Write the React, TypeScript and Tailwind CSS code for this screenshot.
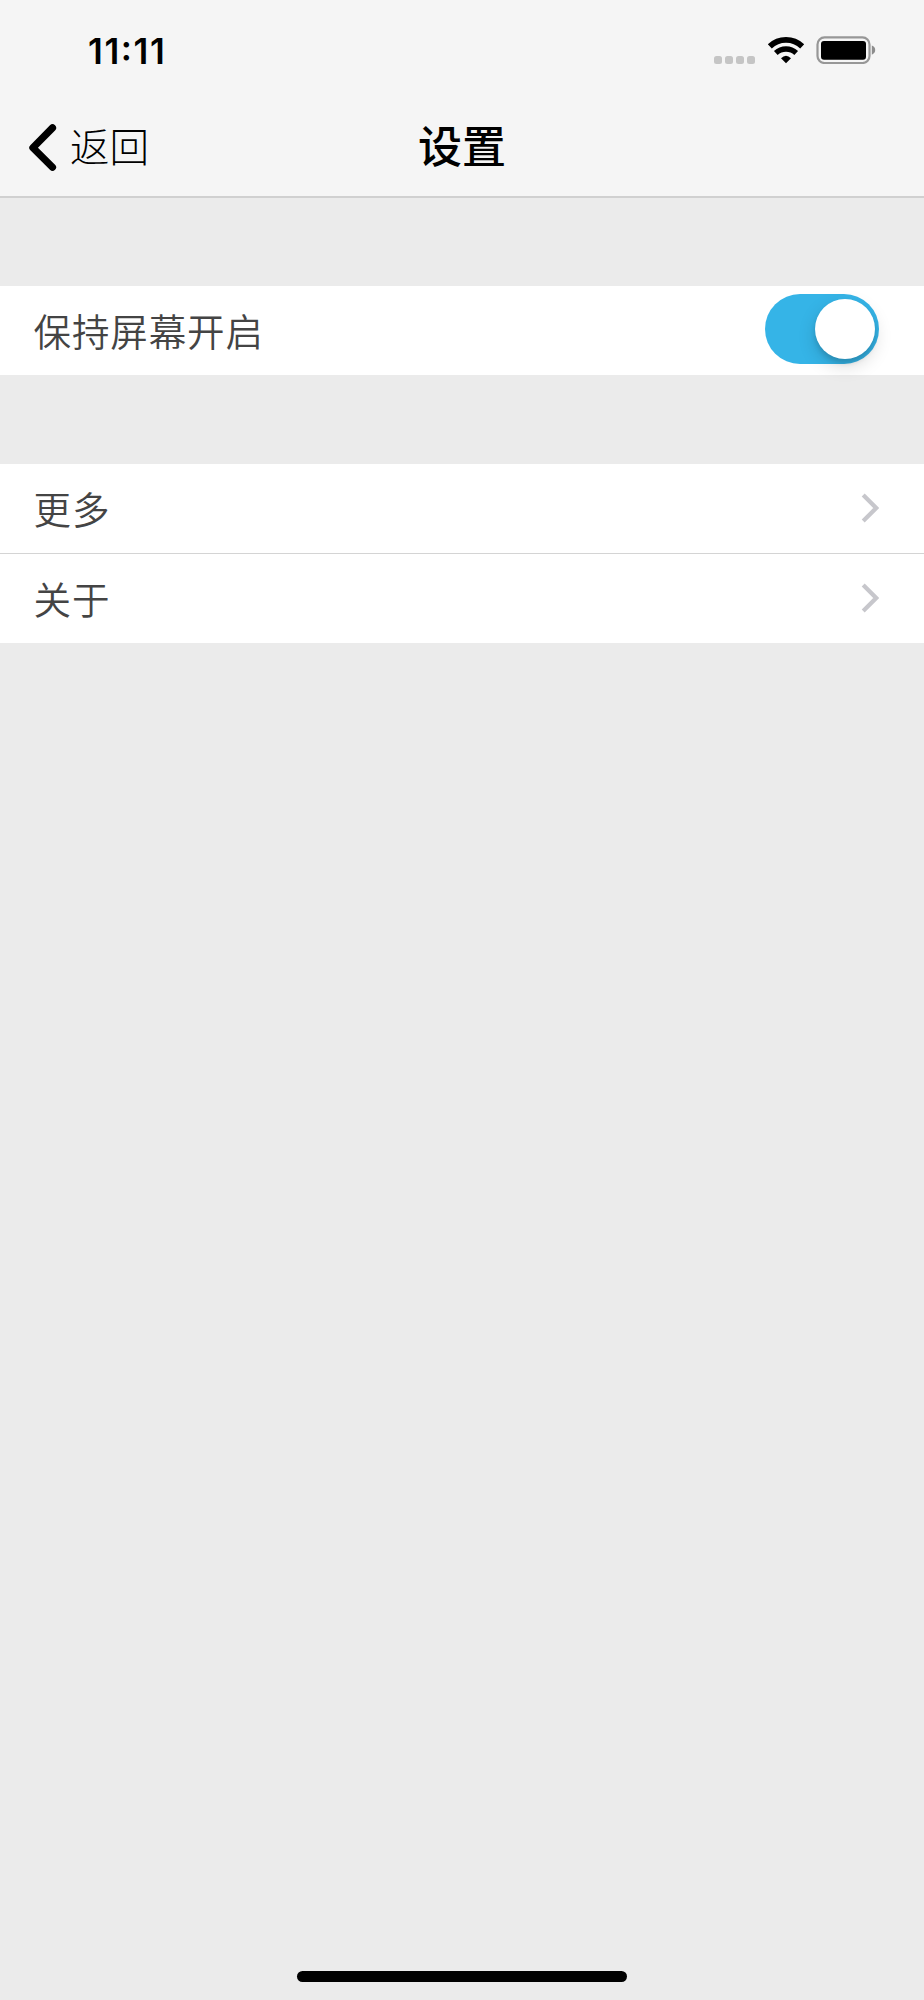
import type { ReactNode } from "react";

const LINKS = ["更多", "关于"];

function StatusBar() {
  return (
    <div className="flex h-[100px] items-start justify-between pl-[88px] pr-[48px]">
      <span className="mt-[30px] font-['Inter'] text-[35px] leading-[42px] font-semibold tracking-[1.6px] [font-feature-settings:'case']">11:11</span>
      <div className="mt-[36px] flex">
        <div className="mt-[20px] flex gap-[3px]">
          {[0, 1, 2, 3].map((dot) => (
            <span key={dot} className="h-[7.5px] w-[8px] rounded-[2.5px] bg-[#c5c5c5]" />
          ))}
        </div>
        <svg className="ml-[12px] h-[28px] w-[38px]" viewBox="0 0 38 28" fill="none">
          <path d="M2.8 10.4a23.5 23.5 0 0 1 32.4 0" stroke="#000" strokeWidth="5.8" />
          <path d="M8.8 17a15 15 0 0 1 20.4 0" stroke="#000" strokeWidth="5.4" />
          <path d="M14 22.2q5-5 10 0l-5 5z" fill="#000" />
        </svg>
        <svg className="ml-[11px] h-[28px] w-[60px]" viewBox="0 0 60 28">
          <rect x="1.5" y="1.4" width="52" height="25.6" rx="7" fill="none" stroke="#979797" strokeWidth="2.2" />
          <rect x="5" y="5" width="45" height="18.8" rx="3" />
          <path d="M55.8 9.5q3.4 1.2 3.4 4.6t-3.4 4.6z" fill="#8c8c8c" />
        </svg>
      </div>
    </div>
  );
}

function NavBar() {
  return (
    <div className="grid h-[96px] grid-cols-3 items-center">
      <button className="flex items-center pl-[28px]">
        <svg className="h-[48px] w-[30px]" viewBox="0 0 30 48" fill="none">
          <path d="M24.5 3.9 4.9 23.7l19.6 19.6" stroke="#000" strokeWidth="7.2" strokeLinecap="round" strokeLinejoin="round" />
        </svg>
        <span className="mb-[6px] ml-[12px] text-[39.5px] leading-[48px] font-light">返回</span>
      </button>
      <h1 className="mb-[8px] text-center text-[44px] leading-[52px] font-medium">设置</h1>
    </div>
  );
}

function Row({ label, children }: { label: string; children: ReactNode }) {
  return (
    <div className="flex h-[89px] items-center justify-between bg-white pl-[33.5px] pr-[45px]">
      <span className="mb-[2px] text-[37.5px] leading-[48px] font-[350] tracking-[0.9px] text-[#444]">{label}</span>
      {children}
    </div>
  );
}

function Toggle() {
  return (
    <button role="switch" aria-checked="true" className="mb-[3px] flex h-[69.5px] w-[114px] items-center justify-end rounded-full bg-[#35b4e7] pr-[4px]">
      <span className="h-[60.5px] w-[60.5px] rounded-full bg-white shadow-[0_7px_18px_rgba(0,0,0,0.15),0_4px_5px_rgba(0,0,0,0.12)]" />
    </button>
  );
}

function Chevron() {
  return (
    <svg className="mb-[1px] h-[30px] w-[18px]" viewBox="0 0 18 30" fill="none">
      <path d="m2.2 2 13 13-13 13" stroke="#c7c7cc" strokeWidth="4.2" />
    </svg>
  );
}

export default function App() {
  return (
    <div className="flex h-[2000px] w-[924px] flex-col overflow-hidden bg-[#ebebeb] font-['Noto_Sans_CJK_SC',sans-serif] text-black">
      <header className="h-[198px] border-b-2 border-[#d0d0d0] bg-[#f5f5f5]">
        <StatusBar />
        <NavBar />
      </header>
      <main className="flex-1">
        <section className="mt-[88px]">
          <Row label="保持屏幕开启">
            <Toggle />
          </Row>
        </section>
        <section className="mt-[89px] flex flex-col gap-px bg-[#d4d4d4]">
          {LINKS.map((label) => (
            <Row key={label} label={label}>
              <Chevron />
            </Row>
          ))}
        </section>
      </main>
      <div className="mx-auto mb-[18px] h-[11px] w-[330px] rounded-full bg-black" />
    </div>
  );
}
